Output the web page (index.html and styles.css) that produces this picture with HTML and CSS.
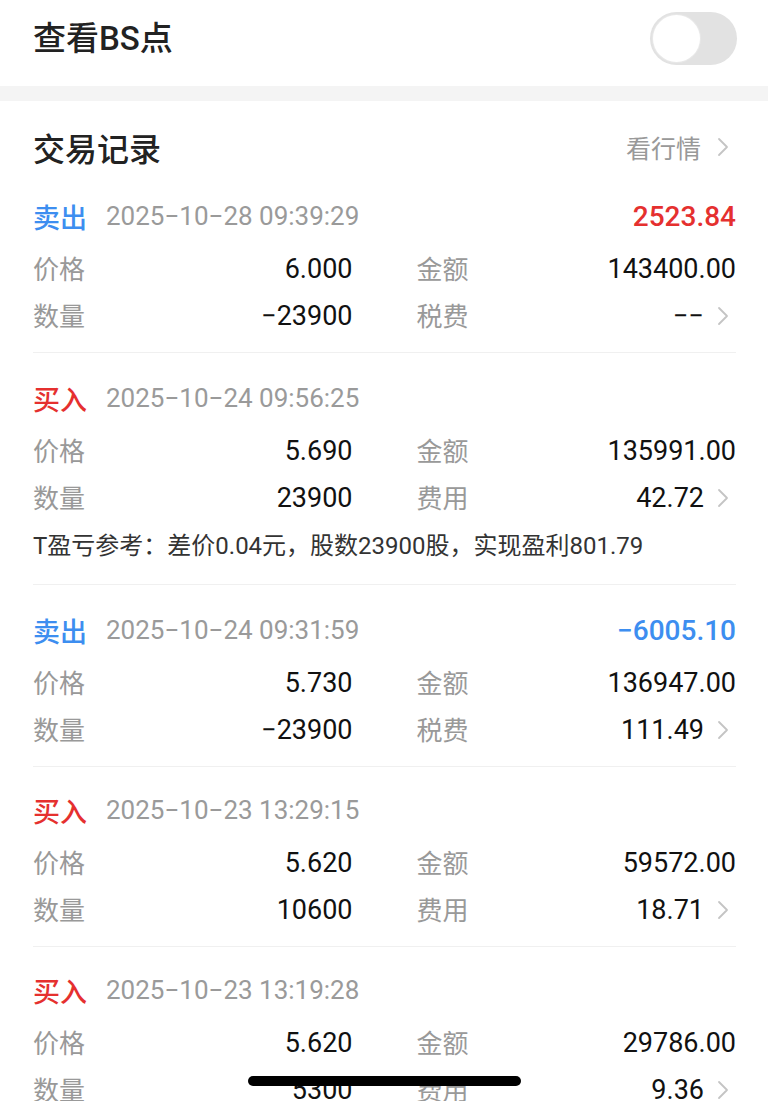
FILE: index.html
```html
<!DOCTYPE html>
<html lang="zh-CN">
<head>
    <meta charset="UTF-8">
    <meta name="viewport" content="width=device-width, initial-scale=1.0">
    <title>交易记录</title>
    <link rel="stylesheet" href="styles.css">
</head>
<body>
    <div class="page">
        <div class="switch-row">
            <div class="switch-title">查看BS点</div>
            <div class="toggle"><span class="knob"></span></div>
        </div>
        <div class="band"></div>

        <div class="card">
            <div class="card-head">
                <h1>交易记录</h1>
                <div class="more">看行情
                    <svg class="chev chev-lg" viewBox="0 0 14 20"><polyline points="3,2 11,10 3,18"/></svg>
                </div>
            </div>

            <!-- 卖出 10-28 -->
            <div class="record">
                <div class="rec-head">
                    <span class="type sell">卖出</span>
                    <span class="time">2025−10−28 09:39:29</span>
                    <span class="profit up">2523.84</span>
                </div>
                <div class="grid">
                    <div class="cell"><span class="label">价格</span><span class="val">6.000</span></div>
                    <div class="cell"><span class="label">金额</span><span class="val">143400.00</span></div>
                    <div class="cell"><span class="label">数量</span><span class="val">−23900</span></div>
                    <div class="cell"><span class="label">税费</span><span class="val">−−<svg class="chev" viewBox="0 0 14 20"><polyline points="3,2 11,10 3,18"/></svg></span></div>
                </div>
            </div>

            <!-- 买入 10-24 -->
            <div class="record">
                <div class="rec-head">
                    <span class="type buy">买入</span>
                    <span class="time">2025−10−24 09:56:25</span>
                </div>
                <div class="grid">
                    <div class="cell"><span class="label">价格</span><span class="val">5.690</span></div>
                    <div class="cell"><span class="label">金额</span><span class="val">135991.00</span></div>
                    <div class="cell"><span class="label">数量</span><span class="val">23900</span></div>
                    <div class="cell"><span class="label">费用</span><span class="val">42.72<svg class="chev" viewBox="0 0 14 20"><polyline points="3,2 11,10 3,18"/></svg></span></div>
                </div>
                <div class="note">T盈亏参考：差价0.04元，股数23900股，实现盈利801.79</div>
            </div>

            <!-- 卖出 10-24 -->
            <div class="record">
                <div class="rec-head">
                    <span class="type sell">卖出</span>
                    <span class="time">2025−10−24 09:31:59</span>
                    <span class="profit down">−6005.10</span>
                </div>
                <div class="grid">
                    <div class="cell"><span class="label">价格</span><span class="val">5.730</span></div>
                    <div class="cell"><span class="label">金额</span><span class="val">136947.00</span></div>
                    <div class="cell"><span class="label">数量</span><span class="val">−23900</span></div>
                    <div class="cell"><span class="label">税费</span><span class="val">111.49<svg class="chev" viewBox="0 0 14 20"><polyline points="3,2 11,10 3,18"/></svg></span></div>
                </div>
            </div>

            <!-- 买入 10-23 13:29 -->
            <div class="record">
                <div class="rec-head">
                    <span class="type buy">买入</span>
                    <span class="time">2025−10−23 13:29:15</span>
                </div>
                <div class="grid">
                    <div class="cell"><span class="label">价格</span><span class="val">5.620</span></div>
                    <div class="cell"><span class="label">金额</span><span class="val">59572.00</span></div>
                    <div class="cell"><span class="label">数量</span><span class="val">10600</span></div>
                    <div class="cell"><span class="label">费用</span><span class="val">18.71<svg class="chev" viewBox="0 0 14 20"><polyline points="3,2 11,10 3,18"/></svg></span></div>
                </div>
            </div>

            <!-- 买入 10-23 13:19 -->
            <div class="record">
                <div class="rec-head">
                    <span class="type buy">买入</span>
                    <span class="time">2025−10−23 13:19:28</span>
                </div>
                <div class="grid">
                    <div class="cell"><span class="label">价格</span><span class="val">5.620</span></div>
                    <div class="cell"><span class="label">金额</span><span class="val">29786.00</span></div>
                    <div class="cell"><span class="label">数量</span><span class="val">5300</span></div>
                    <div class="cell"><span class="label">费用</span><span class="val">9.36<svg class="chev" viewBox="0 0 14 20"><polyline points="3,2 11,10 3,18"/></svg></span></div>
                </div>
            </div>
        </div>

        <div class="home-bar"></div>
    </div>
</body>
</html>
```

FILE: styles.css
```css
body {
    margin: 0;
    background-color: #fff;
    color: #222;
    font-family: Roboto, "Noto Sans CJK SC", sans-serif;
}
.page {
    height: 100vh;
    overflow: hidden;
}
.switch-row {
    display: flex;
    justify-content: space-between;
    align-items: center;
    height: 77px;
    padding: 0 31px 9px 33px;
}
.switch-title {
    margin-bottom: 5px;
    font-size: 33px;
    font-weight: 500;
}
.toggle {
    width: 87px;
    height: 53px;
    border-radius: 27px;
    background-color: #e2e2e2;
    display: flex;
    align-items: center;
    padding-left: 3px;
    box-sizing: border-box;
}
.knob {
    width: 47px;
    height: 47px;
    border-radius: 50%;
    background-color: #fff;
    box-shadow: 0 0 0 1px #e8e8e8;
}
.band {
    height: 15px;
    background-color: #f4f4f4;
}
.card {
    padding: 0 32px 0 33px;
}
.card-head {
    display: flex;
    justify-content: space-between;
    align-items: center;
    height: 40px;
    padding: 26px 0 4px;
}
.card-head h1 {
    margin: 0;
    font-size: 32px;
    font-weight: 500;
}
.more {
    display: flex;
    align-items: center;
    font-size: 25px;
    color: #999;
}
.chev {
    width: 14px;
    height: 20px;
    margin: 0 6px 0 12px;
    fill: none;
    stroke: #c4c4c4;
    stroke-width: 1.8;
    stroke-linecap: round;
    stroke-linejoin: round;
}
.chev-lg {
    margin: 0 6px 0 15px;
}
.record {
    padding: 25px 0 13px;
    border-bottom: 1px solid #f0f0f0;
}
.record:nth-child(n+5) {
    padding-top: 23px;
}
.rec-head {
    display: flex;
    align-items: center;
    height: 40px;
    margin-bottom: 9px;
}
.type {
    font-size: 27px;
    font-weight: 500;
}
.sell {
    color: #3d8ef0;
}
.buy {
    color: #e5302f;
}
.time {
    margin-left: 19px;
    font-size: 26px;
    color: #9a9a9a;
}
.profit {
    margin-left: auto;
    font-size: 28px;
    font-weight: 500;
}
.up {
    color: #e5302f;
}
.down {
    color: #3d8ef0;
}
.grid {
    display: grid;
    grid-template-columns: 1fr 1fr;
    column-gap: 64px;
}
.cell {
    display: flex;
    justify-content: space-between;
    align-items: center;
    height: 47px;
}
.label {
    margin-bottom: 3px;
    font-size: 26px;
    color: #999;
}
.val {
    display: flex;
    align-items: center;
    font-size: 27px;
    color: #111;
}
.note {
    margin: 8px 0;
    line-height: 34px;
    font-size: 24px;
    color: #333;
}
.home-bar {
    position: fixed;
    left: 248px;
    top: 1076px;
    width: 273px;
    height: 10px;
    border-radius: 5px;
    background-color: #000;
}
```
